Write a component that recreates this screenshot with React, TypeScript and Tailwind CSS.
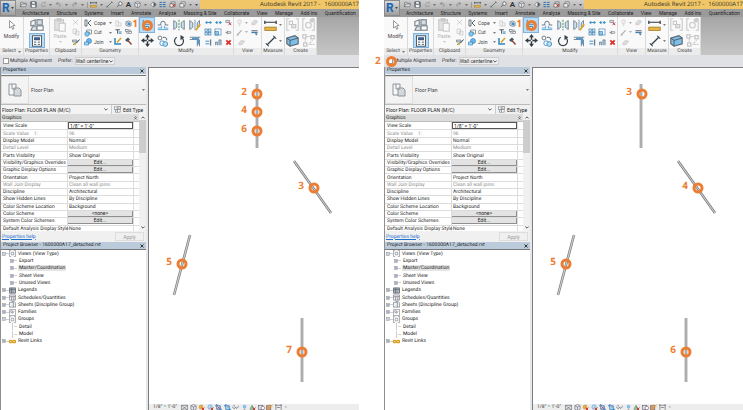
import type { ReactNode } from 'react';

type Mark = { n: string; x: number; y: number };

const ORANGE = '#ed7d31';

/* ---------- icons (16 x 16 grid) ---------- */

function Svg({ className, children }: { className: string; children: ReactNode }) {
  return (
    <svg viewBox="0 0 16 16" className={`block shrink-0 ${className}`} fill="none" strokeWidth="1.3" aria-hidden="true">
      {children}
    </svg>
  );
}

const art: Record<string, ReactNode> = {
  cursor: <path d="M4 1v12l3-3 2 5 2-1-2-5h4z" fill="#fff" stroke="#777" strokeWidth="1.2" />,
  types: (
    <g stroke="#7b858e">
      <path d="M1 4l5-2v6l-5 1z" fill="#f3f5f7" />
      <rect x="8" y="2" width="6" height="6" fill="#d5dde4" />
      <path d="M3 10h5v4H1z" fill="#e2e7eb" />
      <rect x="8" y="9" width="7" height="5" fill="#fff" />
    </g>
  ),
  props: (
    <g>
      <rect x="2" y="1" width="12" height="14" fill="#fff" stroke="#4f5b66" />
      <rect x="4" y="3" width="8" height="4" fill="#3b5f86" />
      <path d="M4 9.500h3M9 9.500h3M4 12.500h3M9 12.500h3" stroke="#53606c" />
    </g>
  ),
  paste: (
    <g stroke="#c9c9c9">
      <rect x="2" y="2" width="10" height="12" fill="#e2e2e2" />
      <rect x="5" y="0.8" width="4" height="2.6" fill="#d0d0d0" />
      <rect x="7" y="6" width="7" height="9" fill="#fafafa" />
    </g>
  ),
  scissors: <path d="M2 2l12 11M14 2L2 13" stroke="#c6c6c6" strokeWidth="1.800" />,
  copyGray: <path d="M2 2h7v9H2zM7 6h7v8H7z" fill="#f4f4f4" stroke="#c3c3c3" />,
  brush: (
    <g>
      <path d="M1 4h9v4H1z" fill="#cfd5da" stroke="#67727c" />
      <path d="M3 14l5-5M15 3l-6 7" stroke="#3d4a56" strokeWidth="2" />
      <path d="M2 11l4 4 4-5z" fill="#d9b23c" />
    </g>
  ),
  cope: (
    <g>
      <path d="M2 2v12M6 2v12M2 2h4M2 14h4" stroke="#4c5863" strokeWidth="1.600" />
      <path d="M14 2L8 8l6 6" stroke="#4c5863" strokeWidth="2" />
    </g>
  ),
  cut: (
    <g>
      <path d="M5 2h10v8l-4 0V6H5z" fill="#fff" stroke="#5b6772" />
      <circle cx="6" cy="10" r="4.5" fill="#8cc6ea" stroke="#2e86c1" />
    </g>
  ),
  join: (
    <g>
      <circle cx="10" cy="6" r="5" fill="#6db4e2" stroke="#2e86c1" />
      <path d="M1 8h8v6H1z" fill="#a9d5f0" stroke="#2e86c1" />
    </g>
  ),
  geoA: <path d="M2 2h6v12H2zM8 5l6 2v7H8" stroke="#c0c0c0" fill="#f3f3f3" />,
  geoB: (
    <g>
      <path d="M1 4h10M6 4v9" stroke="#4c5863" strokeWidth="2.4" />
      <path d="M9 9h6M9 12h6" stroke="#2e86c1" strokeWidth="2" />
    </g>
  ),
  geoC: (
    <g>
      <path d="M2 2v12h12" stroke="#2e86c1" strokeWidth="3" />
      <path d="M6 11l8-9" stroke="#d8a526" strokeWidth="3" />
    </g>
  ),
  geoD: (
    <g>
      <path d="M2 4l7-2 5 3v8l-6 2-6-3z" fill="#cfd9e1" stroke="#5a6671" />
      <path d="M6 5l6 2v6l-6-2z" fill="#3e93cd" />
    </g>
  ),
  geoE: (
    <g stroke="#5a6570">
      <rect x="1" y="3" width="6" height="5" />
      <rect x="9" y="8" width="6" height="5" />
      <path d="M4 8v4h5M8 5h6" />
    </g>
  ),
  hammer: (
    <g>
      <path d="M2 6l6-5 4 4-6 5z" fill="#4a5560" />
      <path d="M8 7l7 8" stroke="#8d3b30" strokeWidth="2.6" />
    </g>
  ),
  align: <path d="M3 1v14M5 4h8v3H5zM5 10h5v3H5z" stroke="#3f87bd" fill="#d7ebf8" />,
  offset: (
    <g>
      <path d="M1 8h4V6a3 3 0 0 1 6 0v2h4" stroke="#6a7681" />
      <path d="M1 12h5V9M15 12h-5V9" stroke="#6fb2de" strokeWidth="1.600" />
      <path d="M1 14h14" stroke="#6fb2de" strokeWidth="1.600" />
    </g>
  ),
  mirror: (
    <g>
      <path d="M1 2v12l4-3V5zM15 2v12l-4-3V5z" fill="#cbe4f4" stroke="#7c8791" />
      <path d="M8 1v14" stroke="#3fa565" strokeDasharray="3 1" />
    </g>
  ),
  mirrorDraw: (
    <g>
      <path d="M1 2v12l4-3V5zM14 2v8h-3V5z" fill="#cbe4f4" stroke="#7c8791" />
      <path d="M8 1v14" stroke="#6c9fc4" />
      <path d="M15 7l-6 8" stroke="#d9a229" strokeWidth="2.4" />
    </g>
  ),
  move: (
    <g>
      <path d="M8 3v10M3 8h10" stroke="#333c45" strokeWidth="1.800" strokeDasharray="4 2" />
      <path d="M8 0l3 4H5zM8 16l3-4H5zM0 8l4-3v6zM16 8l-4-3v6z" fill="#333c45" />
    </g>
  ),
  copy: (
    <g>
      <circle cx="4" cy="4" r="2.6" fill="#fff" stroke="#6d7881" />
      <circle cx="7" cy="11" r="3.2" fill="#fff" stroke="#4d9bd0" />
      <circle cx="11" cy="12" r="3.2" fill="#b7dcf2" stroke="#4d9bd0" />
      <path d="M8 3c4 0 5 1 5 4" stroke="#555f69" />
    </g>
  ),
  rotate: (
    <g>
      <path d="M11 3a6 6 0 1 1-6 0" stroke="#38424c" strokeWidth="1.700" />
      <path d="M10 0l5 3-5 4z" fill="#38424c" />
    </g>
  ),
  trim: (
    <g>
      <path d="M1 3h14M1 6h10v9M14 6v9" stroke="#7b8690" />
      <path d="M4 4.5h8v8" stroke="#4d9bd0" strokeWidth="2.6" />
    </g>
  ),
  split: <path d="M0 8l5-4v3h6V4l5 4-5 4V9H5v3z" fill="#3d8fc9" />,
  splitGap: (
    <g>
      <path d="M0 8l5-4v8zM16 8l-5-4v8z" fill="#3d8fc9" />
      <path d="M4 8h8" stroke="#3d8fc9" strokeWidth="3" strokeDasharray="3 2" />
    </g>
  ),
  unpin: (
    <g>
      <path d="M2 3h8v5H2zM10 8l4 6" stroke="#5d6974" fill="#e4e4e4" />
      <path d="M8 8l6 6M14 8l-6 6" stroke="#cf3a31" strokeWidth="2" />
    </g>
  ),
  array: (
    <g stroke="#3d7fb0" fill="#cfe6f5">
      <rect x="2" y="2" width="5" height="5" />
      <rect x="9" y="2" width="5" height="5" />
      <rect x="2" y="9" width="5" height="5" />
      <rect x="9" y="9" width="5" height="5" />
    </g>
  ),
  scale: (
    <g stroke="#3d7fb0">
      <rect x="2" y="2" width="12" height="12" fill="#fff" />
      <rect x="2" y="7" width="7" height="7" fill="#8cc6ea" />
    </g>
  ),
  pin: <path d="M1 8h4M5 4v8M5 6h8v4H5z" stroke="#66717b" fill="#eee" />,
  extend: (
    <g>
      <path d="M1 5h9M1 11h9" stroke="#3d8fc9" strokeWidth="2.2" />
      <path d="M13 1v14" stroke="#4b5661" strokeWidth="2.2" />
    </g>
  ),
  extendMulti: <path d="M1 14V7h5v7M9 14V2h5v12" stroke="#4b5661" fill="#a9d3ef" />,
  remove: <path d="M3 3l10 10M13 3L3 13" stroke="#d92f28" strokeWidth="4" />,
  bulb: (
    <g stroke="#c4c4c4">
      <circle cx="8" cy="6" r="4.5" fill="#f1f1f1" />
      <path d="M6 12h4M6 15h4" />
    </g>
  ),
  wedge: <path d="M2 9l6-6 7 2-6 8-7 0z" fill="#dcdcdc" stroke="#bdbdbd" />,
  pen: <path d="M3 13L13 3M2 14l4-1" stroke="#a9a9a9" strokeWidth="2.4" />,
  lines: (
    <g>
      <path d="M1 4h14" stroke="#4b5661" strokeWidth="2" />
      <path d="M1 8h14" stroke="#3d7fb0" strokeWidth="3" />
      <path d="M9 10h6l-3 5z" fill="#4b5661" />
    </g>
  ),
  ruler: (
    <g>
      <path d="M1 4h14M1 2v4M15 2v4" stroke="#2f3943" strokeWidth="1.500" />
      <rect x="1" y="10" width="14" height="4" fill="#e5b64a" stroke="#a97a1c" strokeWidth="1" />
    </g>
  ),
  dim: (
    <g>
      <path d="M3 13L13 3" stroke="#2f3943" strokeWidth="1.6" />
      <path d="M1 11l4 4M11 1l4 4" stroke="#2f3943" strokeWidth="1.400" />
    </g>
  ),
  group: (
    <g stroke="#c6c6c6">
      <path d="M4 1H1v14h3M12 1h3v14h-3" />
      <rect x="4" y="4" width="4" height="4" />
      <rect x="7" y="8" width="5" height="4" fill="#e3e3e3" />
    </g>
  ),
  gear: (
    <g stroke="#c6c6c6">
      <path d="M4 1H1v14h3M12 1h3v14h-3" />
      <circle cx="8" cy="9" r="3.4" />
      <circle cx="12" cy="3" r="2" fill="#d6d6d6" />
    </g>
  ),
  part: (
    <g>
      <path d="M1 5l10-3 4 3v7L5 15l-4-3z" fill="#7fbfe6" stroke="#56626d" />
      <path d="M1 5l4 3 10-3M5 8v7" stroke="#56626d" />
    </g>
  ),
  assembly: (
    <g stroke="#bebebe">
      <rect x="1" y="1" width="4" height="4" />
      <rect x="11" y="2" width="4" height="4" />
      <rect x="2" y="11" width="4" height="4" />
      <path d="M6 3h4M4 6v4M8 13l5-5M10 13h5" strokeDasharray="2 1" />
    </g>
  ),
  plan: (
    <g stroke="#8d959c" strokeWidth="1">
      <path d="M2 2h7v11H2z" fill="#f7f7f7" />
      <path d="M7 6h5l2 2v6H7z" fill="#d5d8da" />
      <path d="M5 2v5h4" />
    </g>
  ),
  editType: (
    <g stroke="#6b7680">
      <rect x="1" y="2" width="6" height="6" fill="#fff" />
      <rect x="9" y="1" width="6" height="6" fill="#e4eaf0" />
      <rect x="3" y="9" width="5" height="5" fill="#fff" />
      <rect x="8" y="8" width="6" height="6" fill="#fff" />
    </g>
  ),
  folder: <path d="M1 13V3h5l1 2h7v2M1 13l3-6h12l-3 6z" stroke="#5a6067" fill="#d7dadd" />,
  save: (
    <g>
      <path d="M2 2h12v12H2z" stroke="#4d555d" fill="#7b8793" strokeWidth="2" />
      <path d="M5 2h6v4H5zM4 9h8v5H4z" fill="#f1f1f1" />
    </g>
  ),
  sync: <path d="M13 8a5 5 0 1 1-2-4M12 1v4H8M4 13l5-4" stroke="#a0a0a0" strokeWidth="1.800" />,
  undo: <path d="M3 6h7a4 4 0 0 1 0 7M7 2L3 6l4 4" stroke="#80858a" strokeWidth="1.800" />,
  redo: <path d="M13 6H6a4 4 0 0 0 0 7M9 2l4 4-4 4" stroke="#80858a" strokeWidth="1.800" />,
  line: <path d="M2 14L14 2M1 12l3 3M12 1l3 3" stroke="#4a5057" strokeWidth="1.600" />,
  tag: (
    <g stroke="#4a5057" strokeWidth="1.600">
      <circle cx="10" cy="6" r="4" fill="#f3f3f3" />
      <path d="M7 9l-5 5" />
    </g>
  ),
  cube: <path d="M8 1l6 3v8l-6 3-6-3V4zM2 4l6 3 6-3M8 7v8" stroke="#5a6067" fill="#e6e8ea" />,
  section: (
    <g>
      <path d="M8 2l6 6-6 6-6-6z" fill="#fff" stroke="#4a5057" />
      <path d="M8 2l6 6-6 6z" fill="#4a5057" />
    </g>
  ),
  thin: <path d="M1 3h6M9 3h6M1 8h5M8 8h7M1 13h6M9 13h6" stroke="#2d6fa8" strokeWidth="2.2" />,
  closeWin: (
    <g>
      <path d="M2 6h9v8H2zM5 6V2h9v9h-3" stroke="#4a5057" fill="#e4e4e4" />
      <path d="M8 7l6 6M14 7l-6 6" stroke="#d0342c" strokeWidth="2.2" />
    </g>
  ),
  windows: <path d="M2 6h9v8H2zM5 6V2h9v9h-3" stroke="#4a5057" fill="#f0f0f0" />,
  views: <path d="M5 1H1v14h4M11 1h4v14h-4M5 11V5h6v6z" stroke="#68727b" />,
  legend: <path d="M1 2h14v12H1zM1 6h14M6 2v12" stroke="#5b6670" fill="#a7b2bb" strokeWidth="1.800" />,
  schedule: <path d="M1 2h14v12H1zM1 6h14M6 6v8M11 6v8" stroke="#6b6575" fill="#eee" />,
  sheet: <path d="M1 3h9v11H1zM6 1h6l3 4v9h-5" stroke="#5b6670" fill="#eef0f2" />,
  family: <path d="M1 1h14v14H1zM4 4h4v4H4zM8 11l4-7" stroke="#6d6f7c" />,
  link: (
    <g stroke="#d79a1f" strokeWidth="2.4">
      <rect x="0.8" y="5" width="7" height="6" rx="3" fill="#f5cf6b" />
      <rect x="8.2" y="5" width="7" height="6" rx="3" fill="#f5cf6b" />
    </g>
  ),
  detail: <path d="M1 3h14v11H1zM1 3l14 11M15 3L1 14" stroke="#565d63" fill="#e9e9e9" />,
  sun: (
    <g>
      <circle cx="7" cy="7" r="4.5" fill="#efb33c" stroke="#c9821b" />
      <path d="M8 8l7 7M15 8l-7 7" stroke="#cf352d" strokeWidth="2.2" />
    </g>
  ),
  shadow: (
    <g>
      <circle cx="7" cy="7" r="5" fill="#bfe0f5" stroke="#3d8fc9" />
      <path d="M8 8l7 7M15 8l-7 7" stroke="#cf352d" strokeWidth="2.2" />
    </g>
  ),
  crop: (
    <g>
      <path d="M4 0v12h12M0 4h12v12" stroke="#2f7dbb" strokeWidth="2" />
      <path d="M6 6l5 5M11 6l-5 5" stroke="#cf352d" strokeWidth="2" />
    </g>
  ),
  cropOn: <path d="M4 0v12h12M0 4h12v12M7 7h4" stroke="#2f7dbb" strokeWidth="2" />,
  glasses: <path d="M1 6c3 6 5 6 7 1 2 5 5 3 7-3M3 3l4 2" stroke="#56616b" strokeWidth="1.600" />,
  lamp: (
    <g>
      <circle cx="8" cy="6" r="3" fill="#9ad2f5" stroke="#3d8fc9" />
      <path d="M6 12h4" stroke="#56616b" />
    </g>
  ),
  reveal: (
    <g>
      <path d="M2 12l5-9 6 9z" fill="#9ccfae" stroke="#3b7f57" />
      <path d="M8 8l7 7M15 8l-7 7" stroke="#cf352d" strokeWidth="2.2" />
    </g>
  ),
  constraint: (
    <g stroke="#5a5563">
      <rect x="1" y="3" width="10" height="10" fill="#e1dfe6" />
      <circle cx="11" cy="9" r="4" fill="#fff" />
    </g>
  ),
  highlight: (
    <g>
      <rect x="1" y="4" width="10" height="10" fill="#d99a68" stroke="#5d5a5c" />
      <path d="M9 1l6 6M15 1L9 7" stroke="#e3a12f" strokeWidth="2" />
    </g>
  ),
  frame: <path d="M2 0v16M14 0v16M0 3h16M4 8h8" stroke="#4f575e" />,
};

function Icon({ name, size = 'size-[7px]' }: { name: string; size?: string }) {
  return <Svg className={size}>{art[name]}</Svg>;
}

function Tool({ name, label, size }: { name: string; label: string; size?: string }) {
  return (
    <button type="button" aria-label={label} className="flex items-center justify-center">
      <Icon name={name} size={size} />
    </button>
  );
}

function Caret({ className = 'text-[#555]' }: { className?: string }) {
  return (
    <svg viewBox="0 0 4 2" className={`block h-[2px] w-[3px] shrink-0 ${className}`} aria-hidden="true">
      <path d="M0 0h4L2 2z" fill="currentColor" />
    </svg>
  );
}

function Chevron() {
  return (
    <svg viewBox="0 0 6 4" className="pointer-events-none h-[3px] w-[4px] shrink-0" aria-hidden="true">
      <path d="M0.5 0.5L3 3l2.500-2.500" fill="none" stroke="#333" strokeWidth="1.2" />
    </svg>
  );
}

/* ---------- title bar and tabs ---------- */

function TitleBar() {
  return (
    <header className="flex h-[9px] overflow-hidden bg-[#f0c667] pl-4">
      <div className="flex w-[184px] shrink-0 items-center justify-between bg-linear-to-b from-[#cfcfcf] to-[#b4b4b4] pr-[2px] pl-[4px]">
        <Tool name="folder" label="Open" />
        <Tool name="save" label="Save" />
        <Tool name="sync" label="Synchronize" />
        <Caret />
        <Tool name="undo" label="Undo" />
        <Caret />
        <Tool name="redo" label="Redo" />
        <Caret />
        <span className="h-[6px] w-px bg-[#999]" />
        <Tool name="ruler" label="Measure" />
        <Caret />
        <Tool name="line" label="Aligned dimension" />
        <Tool name="tag" label="Tag by category" />
        <button type="button" className="text-[8px] leading-[8px] font-semibold text-[#333]">
          A
        </button>
        <Tool name="cube" label="Default 3D view" />
        <Caret />
        <Tool name="section" label="Section" />
        <Tool name="thin" label="Thin lines" />
        <Tool name="closeWin" label="Close hidden windows" />
        <Tool name="windows" label="Switch windows" />
        <Caret />
        <Caret className="text-[#222]" />
      </div>
      <h1 className="ml-auto flex gap-[4px] font-['Open_Sans','Noto_Sans',sans-serif] text-[6px] leading-[9px] whitespace-nowrap text-[#3a3426]">
        <span>Autodesk Revit 2017 -</span>
        <span>1600000A17</span>
      </h1>
    </header>
  );
}

const tabs = [
  'Architecture',
  'Structure',
  'Systems',
  'Insert',
  'Annotate',
  'Analyze',
  'Massing & Site',
  'Collaborate',
  'View',
  'Manage',
  'Add-Ins',
  'Quantification',
];

function Tabs() {
  return (
    <nav className="flex h-[8px] justify-between bg-[#9b9b9b] pr-[3px] pl-[22px] text-[5px] leading-[8px] text-[#222]">
      {tabs.map((tab) => (
        <button type="button" key={tab} className="whitespace-nowrap">
          {tab}
        </button>
      ))}
    </nav>
  );
}

function AppButton() {
  return (
    <button
      type="button"
      aria-label="Application menu"
      className="absolute top-0 left-0 flex h-[16px] w-[16px] items-center border border-[#8a8a8a] bg-linear-to-b from-[#d9d9d9] to-[#9f9f9f]"
    >
      <span className="pl-px text-[12px] leading-[14px] font-bold text-[#1c66b0]">R</span>
      <span className="pl-px">
        <Caret className="text-[#222]" />
      </span>
    </button>
  );
}

/* ---------- ribbon ---------- */

function Panel({ title, width, children }: { title: ReactNode; width: string; children: ReactNode }) {
  return (
    <section className={`flex shrink-0 flex-col border-r border-[#dadada] ${width}`}>
      <div className="relative flex h-[31px] bg-[#f9f9f9]">{children}</div>
      <h2 className="flex h-[7px] items-center justify-center gap-[2px] bg-[#ececec] text-[5px] leading-[7px] text-[#444]">
        {title}
      </h2>
    </section>
  );
}

function Ring({ className }: { className: string }) {
  return <span className={`pointer-events-none absolute size-[11px] rounded-full border-3 border-[#ed7d31] ${className}`} />;
}

function StepNumber({ className, children }: { className: string; children: ReactNode }) {
  return (
    <span
      className={`absolute font-['Open_Sans','Noto_Sans',sans-serif] text-[10px] leading-[10px] font-bold text-[#ed7d31] ${className}`}
    >
      {children}
    </span>
  );
}

function GeometryRow({ icon, label }: { icon: string; label: string }) {
  return (
    <button type="button" className="flex items-center gap-[2px]">
      <Icon name={icon} size="size-[8px]" />
      <span className="w-[13px] text-left">{label}</span>
      <Caret />
    </button>
  );
}

function Ribbon() {
  return (
    <div className="flex h-[38px] bg-linear-to-b from-[#a6a6a6] to-[#c6c6c6] text-[5px] leading-[7px] text-[#444]">
      <Panel
        width="w-[24px]"
        title={
          <>
            Select <Caret />
          </>
        }
      >
        <button type="button" className="flex flex-1 flex-col items-center gap-[3px] pt-[3px]">
          <Icon name="cursor" size="size-[10px]" />
          Modify
        </button>
      </Panel>
      <Panel width="w-[26px]" title="Properties">
        <div className="flex flex-1 flex-col items-center pt-px">
          <Tool name="types" label="Type properties" size="size-[14px]" />
          <button
            type="button"
            aria-label="Properties"
            className="mt-px flex h-[15px] w-[16px] items-center justify-center border border-[#7fb2dc] bg-[#b9dcf6]"
          >
            <Icon name="props" size="size-[12px]" />
          </button>
        </div>
      </Panel>
      <Panel width="w-[32px]" title="Clipboard">
        <button type="button" className="flex w-[20px] flex-col items-center gap-px pt-px text-[#b5b5b5]">
          <Icon name="paste" size="size-[14px]" />
          Paste
          <Caret className="text-[#b5b5b5]" />
        </button>
        <div className="flex flex-1 flex-col items-center justify-between py-[2px]">
          <Tool name="scissors" label="Cut to clipboard" />
          <Tool name="copyGray" label="Copy to clipboard" size="size-[8px]" />
          <Tool name="brush" label="Match type" size="size-[8px]" />
        </div>
      </Panel>
      <Panel width="w-[57px]" title="Geometry">
        <div className="flex flex-col justify-between py-[2px] pl-[2px]">
          <GeometryRow icon="cope" label="Cope" />
          <GeometryRow icon="cut" label="Cut" />
          <GeometryRow icon="join" label="Join" />
        </div>
        <div className="ml-px grid w-[20px] grid-cols-2 py-[2px]">
          <Tool name="geoA" label="Wall joins" />
          <Tool name="geoD" label="Split face" />
          <Tool name="geoB" label="Beam joins" />
          <Tool name="geoE" label="Unjoin" />
          <Tool name="geoC" label="Paint" size="size-[8px]" />
          <Tool name="hammer" label="Demolish" size="size-[8px]" />
        </div>
        <StepNumber className="top-px right-0">1</StepNumber>
      </Panel>
      <Panel width="w-[95px]" title="Modify">
        <div className="grid w-[64px] grid-cols-4">
          <button
            type="button"
            aria-label="Align"
            className="relative flex items-center justify-center border border-[#7fb2dc] bg-[#b9dcf6]"
          >
            <Icon name="align" size="size-[12px]" />
            <Ring className="top-[2px] left-[2px]" />
          </button>
          <Tool name="offset" label="Offset" size="size-[12px]" />
          <Tool name="mirror" label="Mirror, pick axis" size="size-[12px]" />
          <Tool name="mirrorDraw" label="Mirror, draw axis" size="size-[12px]" />
          <Tool name="move" label="Move" size="size-[13px]" />
          <Tool name="copy" label="Copy" size="size-[12px]" />
          <Tool name="rotate" label="Rotate" size="size-[12px]" />
          <Tool name="trim" label="Trim to corner" size="size-[12px]" />
        </div>
        <div className="grid flex-1 grid-cols-3 py-px">
          <Tool name="split" label="Split element" />
          <Tool name="splitGap" label="Split with gap" />
          <Tool name="unpin" label="Unpin" />
          <Tool name="array" label="Array" size="size-[8px]" />
          <Tool name="scale" label="Scale" size="size-[8px]" />
          <Tool name="pin" label="Pin" />
          <Tool name="extend" label="Extend single" />
          <Tool name="extendMulti" label="Extend multiple" />
          <Tool name="remove" label="Delete" />
        </div>
      </Panel>
      <Panel width="w-[28px]" title="View">
        <div className="grid flex-1 grid-cols-[14px_1fr] py-px">
          <span className="flex items-center justify-end gap-[2px]">
            <Tool name="bulb" label="Hide" />
            <Caret className="text-[#999]" />
          </span>
          <Tool name="wedge" label="Displace" />
          <span className="flex items-center justify-end gap-[2px]">
            <Tool name="pen" label="Override" />
            <Caret className="text-[#999]" />
          </span>
          <Tool name="lines" label="Linework" />
          <Tool name="wedge" label="Cut profile" />
        </div>
      </Panel>
      <Panel width="w-[23px]" title="Measure">
        <div className="grid flex-1 grid-cols-[17px_1fr] items-center">
          <Tool name="ruler" label="Measure" size="size-[13px]" />
          <Caret />
          <Tool name="dim" label="Dimension" size="size-[12px]" />
          <Caret />
        </div>
      </Panel>
      <Panel width="w-[32px]" title="Create">
        <div className="grid flex-1 grid-cols-2">
          <Tool name="group" label="Create group" size="size-[13px]" />
          <Tool name="gear" label="Create similar" size="size-[13px]" />
          <Tool name="part" label="Create parts" size="size-[13px]" />
          <Tool name="assembly" label="Create assembly" size="size-[13px]" />
        </div>
      </Panel>
    </div>
  );
}

function OptionsBar({ id, picked }: { id: string; picked: boolean }) {
  return (
    <div className="relative flex h-[12px] items-center bg-[#dfe1e5] pl-[3px] text-[5px] leading-[8px] text-[#333]">
      <input
        type="checkbox"
        id={`${id}-multi`}
        className="size-[6px] shrink-0 appearance-none border border-[#9a9a9a] bg-white"
      />
      <label htmlFor={`${id}-multi`} className="w-[49px] pl-px whitespace-nowrap">
        Multiple Alignment
      </label>
      <label htmlFor={`${id}-prefer`}>Prefer:</label>
      <div className="ml-[2px] flex h-[8px] w-[40px] items-center border border-[#cfcfcf] bg-[#eeeeee] pr-px">
        <select id={`${id}-prefer`} className="min-w-0 flex-1 appearance-none leading-[6px]">
          <option>Wall centerline</option>
        </select>
        <Chevron />
      </div>
      {picked && (
        <>
          <Ring className="top-px left-[2px]" />
          <StepNumber className="top-0 -left-[9px]">2</StepNumber>
        </>
      )}
    </div>
  );
}

/* ---------- palettes ---------- */

function PaletteTitle({ children }: { children: ReactNode }) {
  return (
    <div className="flex h-[7px] items-center justify-between bg-[#bccbdc] px-[2px] text-[5px] leading-[7px] text-[#222]">
      <h2>{children}</h2>
      <button type="button" aria-label="Close">
        <svg viewBox="0 0 4 4" className="block size-[4px]" aria-hidden="true">
          <path d="M0.500 0.500l3 3M3.500 0.500l-3 3" stroke="#222" strokeWidth="0.900" />
        </svg>
      </button>
    </div>
  );
}

type Row = { name: string; value: string; kind?: 'muted' | 'button' | 'field' };

const rows: Row[] = [
  { name: 'View Scale', value: '1/8" = 1\'-0"', kind: 'field' },
  { name: 'Scale Value    1:', value: '96', kind: 'muted' },
  { name: 'Display Model', value: 'Normal' },
  { name: 'Detail Level', value: 'Medium', kind: 'muted' },
  { name: 'Parts Visibility', value: 'Show Original' },
  { name: 'Visibility/Graphics Overrides', value: 'Edit...', kind: 'button' },
  { name: 'Graphic Display Options', value: 'Edit...', kind: 'button' },
  { name: 'Orientation', value: 'Project North' },
  { name: 'Wall Join Display', value: 'Clean all wall joins', kind: 'muted' },
  { name: 'Discipline', value: 'Architectural' },
  { name: 'Show Hidden Lines', value: 'By Discipline' },
  { name: 'Color Scheme Location', value: 'Background' },
  { name: 'Color Scheme', value: '<none>', kind: 'button' },
  { name: 'System Color Schemes', value: 'Edit...', kind: 'button' },
  { name: 'Default Analysis Display Style', value: 'None' },
];

function PropertyRow({ row }: { row: Row }) {
  const tone = row.kind === 'muted' ? 'text-[#8d8d8d]' : 'text-[#1f1f1f]';
  return (
    <tr className={tone}>
      <th scope="row" className="w-[67px] border-r border-b border-[#dcdcdc] p-0 pl-[2px] text-left font-normal whitespace-pre">
        {row.name}
      </th>
      <td className="border-r border-b border-[#dcdcdc] p-0">
        {row.kind === 'button' && (
          <button type="button" className="block h-[6px] w-full border-r border-b border-[#8f8f8f] bg-[#e3e3e3] text-center leading-[5px]">
            {row.value}
          </button>
        )}
        {row.kind === 'field' && (
          <input
            aria-label={row.name}
            defaultValue={row.value}
            className="block h-[7px] w-full border border-[#555] bg-white pl-px leading-[5px]"
          />
        )}
        {(!row.kind || row.kind === 'muted') && <span className="block pl-px">{row.value}</span>}
      </td>
      <td className="w-[5px] border-b border-[#dcdcdc] p-0" />
    </tr>
  );
}

function Properties({ id }: { id: string }) {
  return (
    <section className="border-l border-[#8f8f8f] bg-[#f0f0f0] text-[5px] leading-[6px] text-[#222]">
      <PaletteTitle>Properties</PaletteTitle>
      <button
        type="button"
        className="mt-px flex h-[29px] w-full items-center border-t border-[#777] bg-linear-to-b from-[#f7f7f7] to-[#ececec] pr-px"
      >
        <span className="flex h-full w-[28px] items-center justify-center border border-[#dddddd] bg-[#f3f3f3]">
          <Icon name="plan" size="size-[16px]" />
        </span>
        <span className="flex-1 pl-[2px] text-left text-[#444]">Floor Plan</span>
        <Caret />
      </button>
      <div className="flex h-[10px] items-center border-t border-[#bbbbbb]">
        <div className="flex h-full w-[111px] items-center border-r border-[#cccccc] bg-[#f4f4f4] pr-[3px] pl-px">
          <select aria-label="Instance" id={`${id}-instance`} className="min-w-0 flex-1 appearance-none">
            <option>Floor Plan: FLOOR PLAN (M/C)</option>
          </select>
          <Chevron />
        </div>
        <button type="button" className="flex items-center gap-[2px] pl-[2px] whitespace-nowrap">
          <Icon name="editType" />
          Edit Type
        </button>
      </div>
      <div className="flex h-[117px] bg-white">
        <div className="flex-1 overflow-hidden">
          <h3 className="flex h-[8px] items-center justify-between border-b border-[#bdbdbd] bg-[#dcdcdc] pr-[2px] pl-px">
            Graphics
            <svg viewBox="0 0 4 6" className="h-[4px] w-[3px]" aria-hidden="true">
              <path d="M0.500 2.500L2 1l1.500 1.500M0.500 5L2 3.500 3.500 5" fill="none" stroke="#222" />
            </svg>
          </h3>
          <table className="h-[111px] w-full table-fixed border-separate border-spacing-0">
            <tbody>
              {rows.map((row) => (
                <PropertyRow key={row.name} row={row} />
              ))}
            </tbody>
          </table>
        </div>
        <div className="flex w-[7px] flex-col items-center justify-between bg-[#f0f0f0] py-[2px]">
          <span className="rotate-180">
            <Chevron />
          </span>
          <span className="mt-px mb-auto h-[33px] w-full bg-[#cdcdcd]" />
          <Chevron />
        </div>
      </div>
      <div className="flex h-[11px] items-center justify-between pr-[2px] pl-px">
        <a href="#help" className="text-[#1d6fd0] underline">
          Properties help
        </a>
        <button type="button" disabled className="h-[9px] w-[29px] border border-[#dddddd] text-[#9a9a9a]">
          Apply
        </button>
      </div>
    </section>
  );
}

type Node = { label: string; icon?: string; depth: number; box?: '+' | '-'; active?: boolean };

const nodes: Node[] = [
  { label: 'Views (View Type)', icon: 'views', depth: 0, box: '-' },
  { label: 'Export', depth: 1, box: '+' },
  { label: 'Master/Coordination', depth: 1, box: '+', active: true },
  { label: 'Sheet View', depth: 1, box: '+' },
  { label: 'Unused Views', depth: 1, box: '+' },
  { label: 'Legends', icon: 'legend', depth: 0, box: '+' },
  { label: 'Schedules/Quantities', icon: 'schedule', depth: 0, box: '+' },
  { label: 'Sheets (Discipline Group)', icon: 'sheet', depth: 0, box: '+' },
  { label: 'Families', icon: 'family', depth: 0, box: '+' },
  { label: 'Groups', icon: 'views', depth: 0, box: '-' },
  { label: 'Detail', depth: 1 },
  { label: 'Model', depth: 1 },
  { label: 'Revit Links', icon: 'link', depth: 0, box: '+' },
];

function Expander({ sign }: { sign: '+' | '-' }) {
  return (
    <svg viewBox="0 0 5 5" className="block size-[4px] shrink-0" aria-hidden="true">
      <rect x="0.500" y="0.500" width="4" height="4" fill="#fff" stroke="#9a9a9a" strokeWidth="0.800" />
      <path d={sign === '+' ? 'M1.500 2.500h2M2.500 1.500v2' : 'M1.500 2.500h2'} stroke="#2a4f9c" strokeWidth="0.800" />
    </svg>
  );
}

function Browser() {
  return (
    <section className="flex flex-1 flex-col border-l border-[#8f8f8f] bg-white text-[5px] leading-[6px] text-[#222]">
      <PaletteTitle>Project Browser - 1600000A17_detached.rvt</PaletteTitle>
      <ul className="flex h-[96px] flex-col border-t border-[#777]">
        {nodes.map((node) => (
          <li key={node.label} className={`flex flex-1 items-center ${node.depth ? 'pl-[9px]' : 'pl-px'}`}>
            <span className="flex w-[4px] justify-center">
              {node.box ? <Expander sign={node.box} /> : <span className="h-[7px] border-l border-[#ccc]" />}
            </span>
            <span className="h-px w-[3px] bg-[#d0d0d0]" />
            {node.icon && <Icon name={node.icon} />}
            <span className={`whitespace-nowrap ${node.icon ? 'ml-[2px]' : 'ml-px px-px'} ${node.active ? 'bg-[#e4e4e4]' : ''}`}>
              {node.label}
            </span>
          </li>
        ))}
      </ul>
    </section>
  );
}

/* ---------- drawing area ---------- */

const walls = [
  [108, 16, 108, 80],
  [145, 93, 182, 145],
  [41, 167, 25, 227],
  [153, 250, 153, 314],
];

const status = ['detail', 'cube', 'sun', 'shadow', 'crop', 'cropOn', 'glasses', 'lamp', 'reveal', 'constraint', 'highlight', 'frame'];

function Canvas({ marks }: { marks: Mark[] }) {
  return (
    <main className="flex min-w-0 flex-1 flex-col border-l border-[#7d7d7d] bg-white">
      <svg className="block min-h-0 w-full flex-1 overflow-hidden border-t border-[#7d7d7d]" aria-label="Floor plan with four walls">
        {walls.map(([x1, y1, x2, y2]) => (
          <g key={x1}>
            <line x1={x1} y1={y1} x2={x2} y2={y2} stroke="#858585" strokeWidth="2.6" />
            <line x1={x1} y1={y1} x2={x2} y2={y2} stroke="#d4d4d4" strokeWidth="1" />
          </g>
        ))}
        {marks.map((mark) => (
          <g key={mark.n}>
            <circle cx={mark.x} cy={mark.y} r="4" fill="none" stroke={ORANGE} strokeWidth="3" />
            <text
              x={mark.x - 13}
              y={mark.y + 1}
              textAnchor="middle"
              fill={ORANGE}
              className="font-['Open_Sans','Noto_Sans',sans-serif] text-[10px] font-bold"
            >
              {mark.n}
            </text>
          </g>
        ))}
      </svg>
      <footer className="flex h-[6px] items-center bg-[#ededed] pl-[4px] text-[5px] leading-[6px] text-[#333]">
        <span className="w-[28px] whitespace-nowrap">{'1/8" = 1\'-0"'}</span>
        <div className="flex w-[101px] justify-between">
          {status.map((name) => (
            <Icon key={name} name={name} size="size-[7px]" />
          ))}
        </div>
        <span className="pl-[3px]">‹</span>
      </footer>
    </main>
  );
}

function RevitWindow({ id, picked = false, marks }: { id: string; picked?: boolean; marks: Mark[] }) {
  return (
    <article className="relative flex min-w-0 flex-1 flex-col">
      <TitleBar />
      <Tabs />
      <AppButton />
      <Ribbon />
      <OptionsBar id={id} picked={picked} />
      <div className="flex flex-1 bg-[#e6e7ea]">
        <aside className="flex w-[146px] shrink-0 flex-col">
          <Properties id={id} />
          <Browser />
        </aside>
        <div className="flex min-w-0 flex-1 pl-[2px]">
          <Canvas marks={marks} />
        </div>
      </div>
    </article>
  );
}

export default function App() {
  return (
    <div className="flex h-screen gap-[25px] overflow-hidden bg-white font-[Roboto,'Noto_Sans',sans-serif] [text-rendering:geometricPrecision]">
      <RevitWindow
        id="left"
        marks={[
          { n: '2', x: 108, y: 26 },
          { n: '4', x: 108, y: 44 },
          { n: '6', x: 108, y: 63 },
          { n: '3', x: 165, y: 120 },
          { n: '5', x: 33, y: 196 },
          { n: '7', x: 153, y: 284 },
        ]}
      />
      <RevitWindow
        id="right"
        picked
        marks={[
          { n: '3', x: 109, y: 26 },
          { n: '4', x: 165, y: 120 },
          { n: '5', x: 33, y: 196 },
          { n: '6', x: 153, y: 284 },
        ]}
      />
    </div>
  );
}
